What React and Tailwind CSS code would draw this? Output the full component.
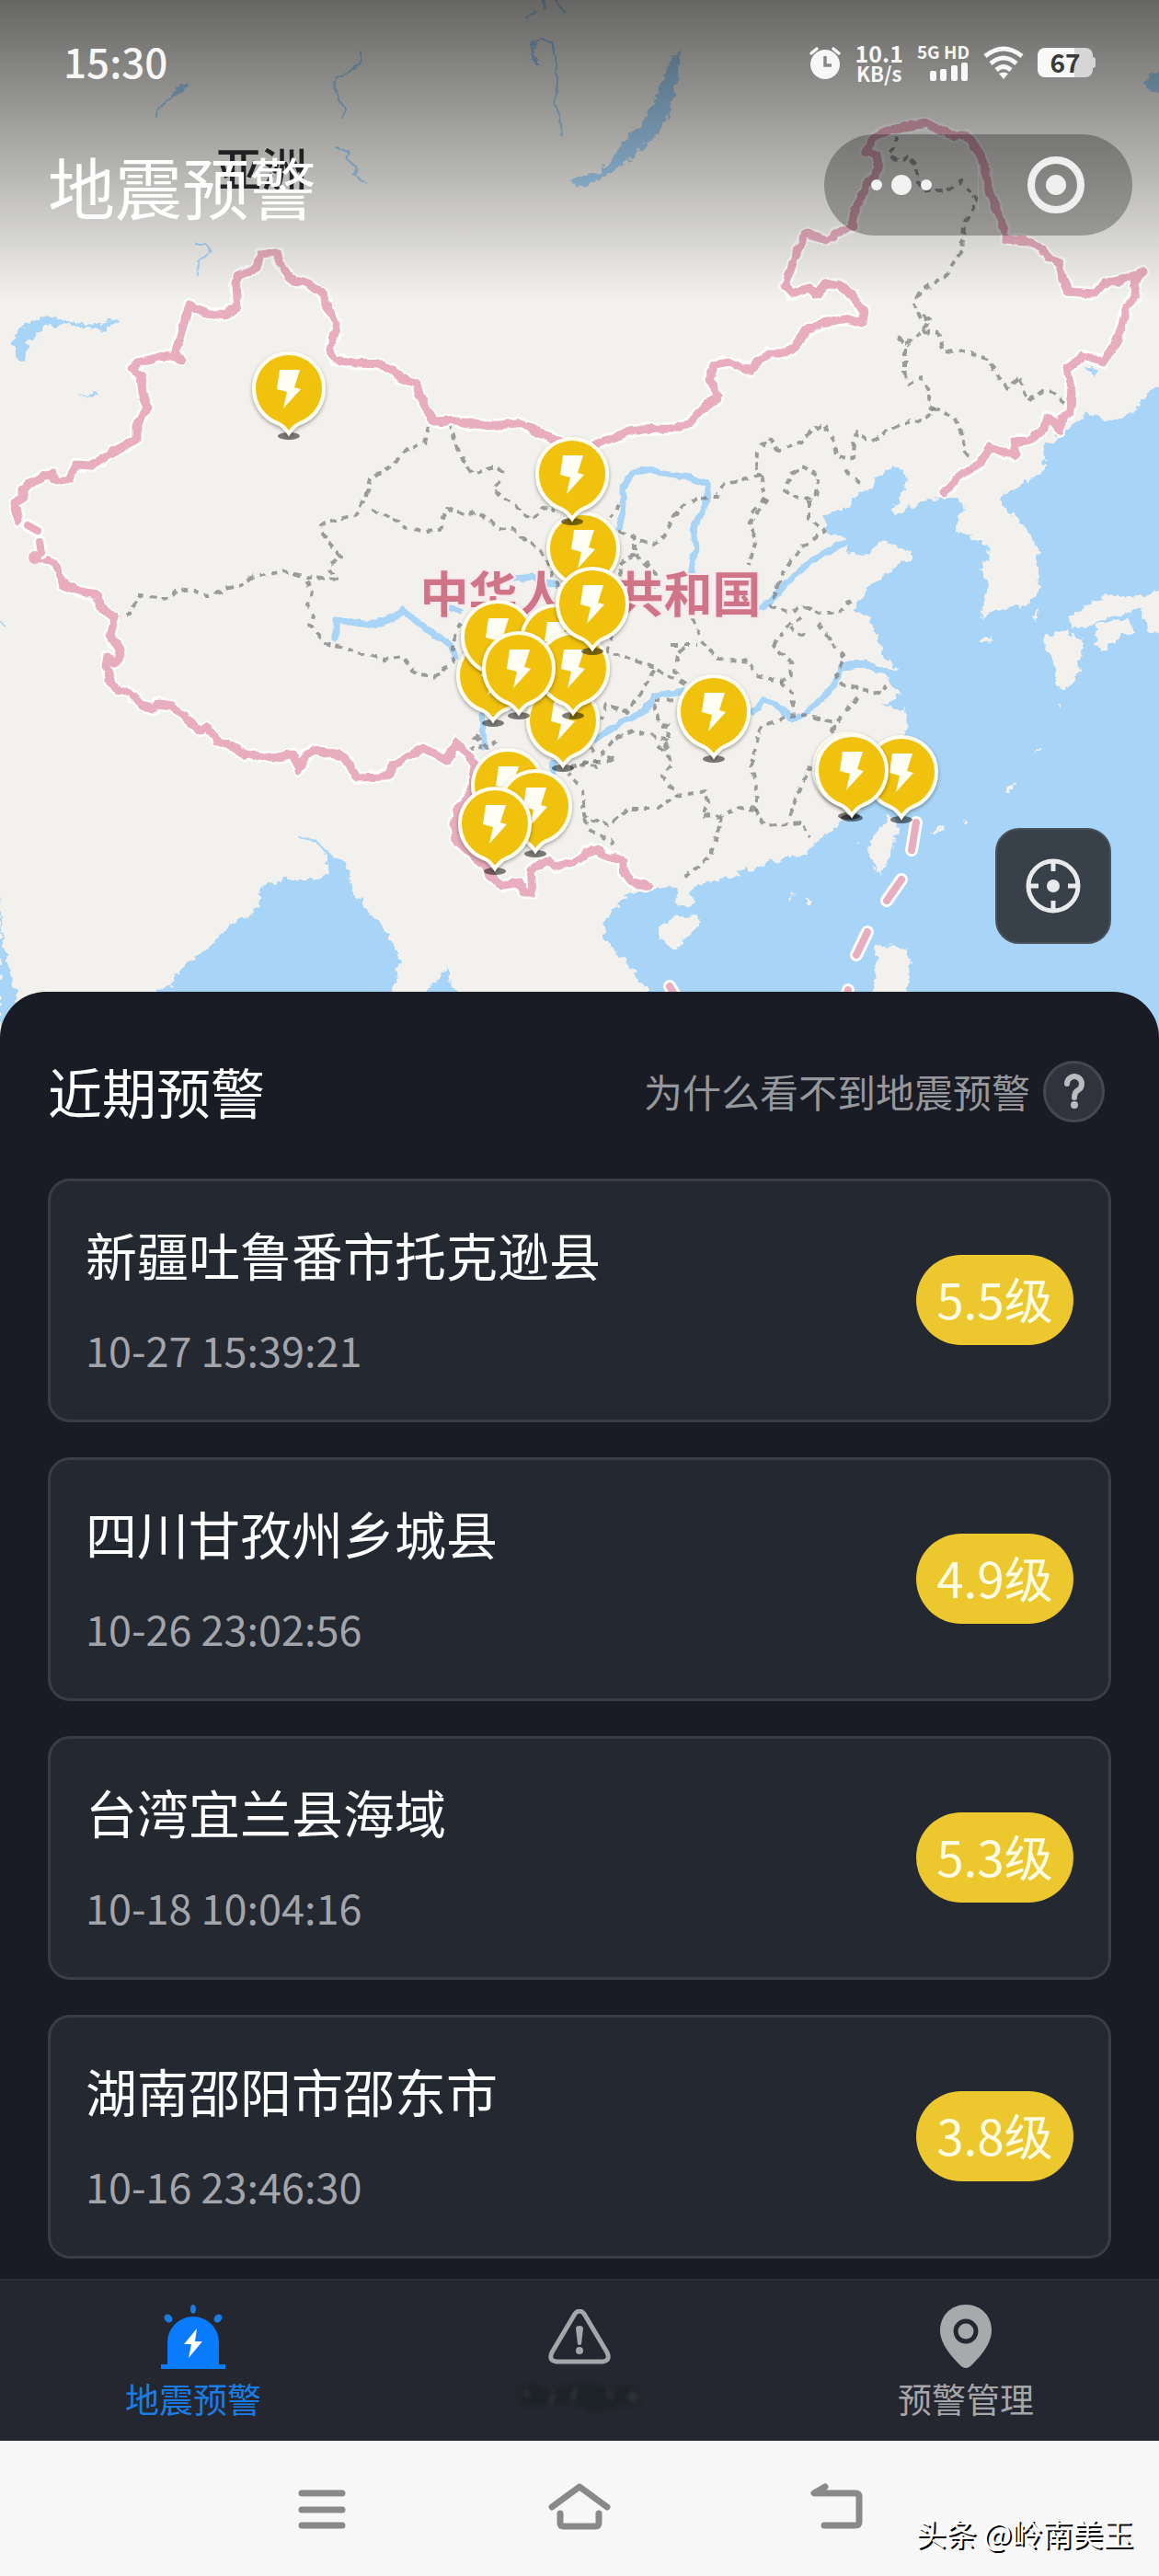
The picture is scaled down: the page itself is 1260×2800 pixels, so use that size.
import { useState } from "react";

const warnings = [
  { id: 1, place: "新疆吐鲁番市托克逊县", time: "10-27 15:39:21", level: "5.5级" },
  { id: 2, place: "四川甘孜州乡城县", time: "10-26 23:02:56", level: "4.9级" },
  { id: 3, place: "台湾宜兰县海域", time: "10-18 10:04:16", level: "5.3级" },
  { id: 4, place: "湖南邵阳市邵东市", time: "10-16 23:46:30", level: "3.8级" },
];

// back to front, centre of each pin head
const pins = [
  [314, 422], [634, 596], [622, 515], [536, 734], [541, 692], [605, 696],
  [612, 783], [623, 726], [564, 726], [644, 656], [552, 853], [582, 876],
  [538, 895], [776, 773], [980, 839], [923, 835], [926, 837],
];

const seas = [
  // east and south china sea
  "M1260 417L1245 430L1233 448L1202 458L1188 451L1180 448L1168 463L1148 475L1136 486L1134 510L1112 527L1088 540L1090 551L1112 569L1128 597L1130 622L1126 647L1116 658L1092 661L1066 670L1074 633L1066 613L1076 608L1072 590L1038 576L1048 551L1044 542L1024 540L1004 544L972 561L968 554L980 544L986 517L976 508L964 510L951 527L929 540L925 551L907 556L895 561L897 576L921 585L923 601L939 604L957 588L992 599L992 610L980 611L959 627L943 640L927 661L947 674L959 708L980 735L964 738L980 754L959 767L984 772L986 786L982 811L972 836L951 869L935 879L911 897L875 927L831 940L791 954L755 963L751 976L753 985L745 989L736 981L738 965L706 963L678 976L660 997L656 1017L678 1044L706 1077V1140H1260Z",
  // bay of bengal
  "M170 1140V1078L189 1069L193 1056L229 1029L249 1004L273 995L283 979L283 965L305 956L342 956L358 949L354 926L378 940L382 965L402 992L420 1011L426 1022L434 1045L428 1078V1140Z",
  "M462 1078L480 1061L484 1051L495 1078V1140H462Z",
  "M0 972L4 1029L20 1086V1140H0Z",
];

const islands = [
  "M1270 642L1231 648L1200 647L1160 672L1164 683L1180 681L1213 669L1241 663L1245 686L1270 692Z",
  "M1192 679L1225 672L1233 686L1208 697L1198 708L1190 701Z",
  "M1156 685L1178 697L1170 740L1156 751L1146 744L1146 719L1134 704L1136 694Z",
  "M1065 697L1072 692L1080 695L1073 700Z",
  "M967 886L976 897L972 922L957 951L953 944L944 933L945 915Z",
  "M760 995L758 1008L736 1032L716 1022L716 1008L730 997Z",
  "M953 1026L986 1031L990 1058L984 1078V1100H949Z",
  "M1126 818L1132 810L1130 816L1124 822Z",
  "M1095 858L1106 848L1100 858L1096 864Z",
  "M1013 902L1027 898L1024 904L1015 906Z",
  "M1046 890L1051 893L1047 895Z",
  "M875 976L881 980L877 985Z",
  "M860 971L864 974L860 977Z",
  "M931 912L935 915L933 920Z",
  "M1150 765L1154 766L1151 770Z",
  "M1124 668L1129 664L1126 679Z",
];

const lakes = [
  "M24 396L14 375L20 358L42 345L64 346L80 351L104 353L125 346L129 351L112 359L80 354L48 353L40 365L30 372L28 386Z",
  "M87 429L98 427L110 429L100 432Z",
  "M738 53L740 62L732 103L724 129L716 143L690 169L664 188L650 196L630 203L617 196L630 193L654 186L668 169L680 152L702 127L716 100L726 72Z",
  "M1270 76L1249 82L1244 91L1252 99L1270 103Z",
  "M1181 401L1187 399L1193 404L1188 409Z",
  "M206 90L196 92L184 106L198 100Z",
  "M578 42L586 52L580 60L590 70L576 66Z",
];

const streams = [
  "M204 92L186 107L171 120V125",
  "M392 57V66L386 75L366 84L363 96L374 117L373 128",
  "M579 45L590 42L600 46L604 62L605 88L603 114L609 126L611 148",
  "M366 160L380 166L376 172L388 182L386 192L398 199",
  "M590 0L592 10M572 18L582 14M604 0L614 14",
  "M214 264L222 266L229 274L216 284L215 300",
  "M326 910L344 914L356 928M0 676L6 680",
];

const rivers = [
  "M673 574L678 551L677 529L690 513L707 510L720 515L750 519L768 526L770 544L762 558L753 576L756 597L752 619V640",
  "M828 660L838 654L853 636L880 611L894 602L921 588",
  "M558 629L579 627L590 634L603 635",
  "M365 695V674L402 679L422 674L438 663L462 683L490 701L495 715",
  "M487 660L500 664M524 776L526 811M602 830L600 850",
  "M647 804L673 786L697 776L713 756L743 751L780 760",
  "M819 774L831 761L843 765L859 781L875 777L907 745L915 724L939 722L976 735",
];

const provinces = [
  "M466 463L462 482L442 489L420 510L402 520L398 540L394 547L386 560L356 567L348 572L356 588L370 604L358 615L364 631L333 627L309 621L273 627L263 636L249 639L225 648L201 640L191 642L183 651L151 648L141 669L128 671",
  "M333 631L340 644L335 658L341 670L337 680L354 699L386 708L418 717L438 714L454 733L478 735L492 719L494 690L502 676",
  "M404 554L432 565L440 573L464 578L478 576L486 553L508 560L518 556L542 574L558 576L585 595L595 608L601 629L612 650",
  "M488 460L500 494L513 515L537 508L548 513M543 524L537 533L557 547L577 565L590 552L605 554",
  "M673 577L693 586L710 592L723 583L733 561L747 547L767 542L782 538L788 526L808 522L825 517L822 504L823 490L835 476L847 490L873 479L883 467L897 461L907 482L909 496L927 499L929 482L931 470L948 480L963 470L988 458L1006 457L1016 444L1036 451L1044 468L1050 492L1056 499",
  "M976 148L967 169L978 176L988 170L996 179L996 196L1006 208L1028 208L1046 197L1062 217L1048 245L1046 272L1034 289L1028 300L1004 315L992 327L1002 348L1012 346L1004 360L984 374L984 406L988 418L1002 410L1010 427L1008 439L1016 444",
  "M1004 360L1020 362L1026 381L1056 384L1076 393L1088 413L1098 422L1108 410L1118 436L1132 425L1144 427L1162 441",
  "M976 368L988 376M1004 340L1012 350",
  "M673 548L663 562M827 517L833 544L823 558L815 572L822 590L813 615",
  "M919 511L937 527M871 506L891 517L887 540L870 543L853 534L859 517Z",
  "M831 542L815 560M879 544V563L897 578L871 595L859 610L849 627L839 658L859 665L875 660L891 667L911 667L925 654",
  "M871 670L855 683L841 702L859 719L861 733L849 740L823 735L815 720L783 717L769 706L761 694L753 674L752 640",
  "M875 690L860 684M891 677L903 697L919 715L909 733L917 745L947 751L959 754L963 745",
  "M931 758L915 779L903 797M871 777L890 780L906 784",
  "M849 740L861 754L863 777L831 788L823 801L817 833L823 861L821 879L805 877L785 886L763 888L771 872L767 860L736 865L714 879L682 879L662 897L638 890L635 886L633 858L618 840",
  "M730 701H757M744 704L736 711L734 729L747 745L712 726L682 715L660 708L666 692",
  "M712 729L690 761L682 774L658 767L654 782",
  "M745 760L710 761L716 786L728 790L724 812L730 830L720 844L736 865M716 810L726 820",
  "M726 805L690 794L666 804L654 820L670 826L630 830M630 832L650 834",
  "M783 897L771 933L740 956M785 886L783 897",
  "M821 879L831 897L871 894L881 911M859 886L875 844L888 824",
  "M636 890L640 902L666 915L654 925",
  "M690 590L690 602L713 622L712 640M690 602L673 615L676 640",
  "M514 802L530 812L540 806M508 815L524 812M516 800L526 806M620 834L650 828M645 818L640 810",
];

const country = [
  "M301 274L283 276L279 291L259 300L256 310L258 334L243 343L219 339L206 331L199 355L191 381L197 391L181 386L151 394L143 400L153 410L155 427L161 444L149 461V477L121 492L98 506L82 505L76 520L60 523L57 514L42 520L24 532L26 541L16 547L20 565",
  "M38 604L58 611L64 620L68 634L82 642L105 646L110 661L124 672L120 690L131 706L129 718L125 722L117 713L115 724L121 742L129 752L139 752L149 761L167 772L173 765L187 767L205 783L217 794L225 790L237 806L257 813L267 822L277 820L297 824L319 819L324 838L331 822L342 815L372 822L380 831L387 845L420 844L428 831L460 813L486 826L495 808L506 817L516 831L512 860L496 883L494 897L496 913L514 930L528 942L534 951L546 963L565 960L569 970H579L577 945L595 935L603 942L630 935L637 927L650 923L660 931L677 935V947L687 958L705 963",
  "M301 274L305 289L319 305L335 308L352 320L356 334L366 351L363 365L358 379L364 391L388 395L416 396L438 411L452 418L462 442L472 458L488 457L532 463L562 460L578 465L589 473L607 479L630 486L650 483L690 467L730 466L750 460L763 444L782 431L771 413L777 396L791 393L815 403L835 384H855L867 375L875 360L895 351L919 346L937 351L939 339L927 322L911 308L897 310L889 320L879 313L861 319L853 310L859 293L867 272L877 253L898 262L915 251L928 245L927 234L941 203L956 183L953 169L941 165L951 148L967 141L1008 134L1036 148H1052L1066 169L1078 214L1088 238L1094 260L1116 262L1132 270L1144 282L1152 286L1156 305L1162 317L1190 319L1200 308L1217 305L1241 296L1233 307L1235 320L1225 334L1215 369L1200 394L1178 387L1160 401L1165 427L1164 448L1154 454L1152 468L1140 453L1134 467L1118 479L1102 480L1104 494L1090 492L1076 486L1066 503L1044 517L1026 536",
];

const dashes = [
  "M30 571L41 577M43 589L45 601",
  "M996 894L991 924M980 956L964 979M943 1013L931 1038M728 1072L736 1086M922 1076L918 1090",
];

const Pin = ({ x, y }) => (
  <g transform={`translate(${x} ${y})`}>
    <ellipse cx="0" cy="52" rx="12" ry="4" fill="#000" opacity="0.5" />
    <path
      d="M-38 0A38 38 0 1 1 38 0C38 19 26 33 12 38C7 40 4 43 0 49C-4 43-7 40-12 38C-26 33-38 19-38 0Z"
      fill="#f0c207"
      stroke="#fffdf0"
      strokeWidth="4"
      filter="url(#pinShadow)"
    />
    <path d="M-10-20H12L6-1L13 1L-6 22L-2 4L-13 1Z" fill="#fffef5" />
  </g>
);

const QuakeMap = () => (
  <svg
    className="block h-[1140px] w-full bg-[#f2f1ed]"
    viewBox="0 0 1260 1140"
    preserveAspectRatio="xMidYMin slice"
    role="img"
    aria-label="地震预警地图"
  >
    <defs>
      <filter id="coast" filterUnits="userSpaceOnUse" x="-20" y="-20" width="1300" height="1180">
        <feTurbulence type="fractalNoise" baseFrequency="0.12" numOctaves="3" seed="4" />
        <feDisplacementMap in="SourceGraphic" scale="12" xChannelSelector="R" yChannelSelector="G" />
      </filter>
      <filter id="rough" filterUnits="userSpaceOnUse" x="-20" y="-20" width="1300" height="1180">
        <feTurbulence type="fractalNoise" baseFrequency="0.08" numOctaves="2" seed="7" />
        <feDisplacementMap in="SourceGraphic" scale="7" xChannelSelector="R" yChannelSelector="G" />
      </filter>
      <filter id="pinShadow" x="-20%" y="-20%" width="140%" height="140%">
        <feDropShadow dx="0" dy="2" stdDeviation="2" floodColor="#000" floodOpacity="0.35" />
      </filter>
      <linearGradient id="shade" x1="0" y1="0" x2="0" y2="1">
        <stop offset="0" stopColor="#000" stopOpacity="0.58" />
        <stop offset="1" stopColor="#000" stopOpacity="0" />
      </linearGradient>
    </defs>

    <g filter="url(#coast)">
      <rect x="-20" y="-20" width="1300" height="1180" fill="#f2f1ed" />
      <rect x="1258" y="420" width="22" height="740" fill="#a7d4f7" />
      <g fill="#a7d4f7">
        {seas.map((d) => <path key={d} d={d} />)}
        {lakes.map((d) => <path key={d} d={d} />)}
      </g>
      <g fill="#f2f1ed">
        {islands.map((d) => <path key={d} d={d} />)}
      </g>
    </g>

    <g fill="none" strokeLinejoin="round" strokeLinecap="round" filter="url(#rough)">
      <g stroke="#a7d4f7" strokeWidth="2">
        {streams.map((d) => <path key={d} d={d} />)}
      </g>
      <g stroke="#a7d4f7" strokeWidth="7">
        {rivers.map((d) => <path key={d} d={d} />)}
      </g>
      <g stroke="#7f7f7f" strokeOpacity="0.75" strokeWidth="4" strokeLinecap="butt" strokeDasharray="7 6">
        {provinces.map((d) => <path key={d} d={d} />)}
      </g>
      <g stroke="#fff" strokeWidth="14">
        {country.map((d) => <path key={d} d={d} />)}
      </g>
      <g stroke="#e8adbf" strokeWidth="9">
        {country.map((d) => <path key={d} d={d} />)}
      </g>
    </g>

    <g fill="none" strokeLinecap="round">
      <g stroke="#fff" strokeWidth="14">
        {dashes.map((d) => <path key={d} d={d} />)}
      </g>
      <g stroke="#e8adbf" strokeWidth="8">
        {dashes.map((d) => <path key={d} d={d} />)}
      </g>
      <circle cx="38" cy="606" r="7" fill="#e8adbf" />
    </g>

    <g fontFamily='"Noto Sans CJK SC", sans-serif' textAnchor="middle">
      <text x="284" y="203" fontSize="50" fontWeight="500" fill="#2c2d2f">亚洲</text>
      <text
        x="642"
        y="666"
        fontSize="53"
        fontWeight="700"
        fill="#d07487"
        stroke="#fbe9ee"
        strokeWidth="4"
        paintOrder="stroke"
      >
        中华人民共和国
      </text>
    </g>

    <rect width="1260" height="325" fill="url(#shade)" />

    {pins.map(([x, y]) => (
      <Pin key={`${x}-${y}`} x={x} y={y} />
    ))}
  </svg>
);

const StatusBar = () => (
  <div className="flex h-[136px] items-center justify-between pl-[69px] pr-[69px] text-[#f7f7f7]">
    <span className="pb-1 text-[44px] font-medium leading-none">15:30</span>
    <div className="flex items-center gap-[15px]">
      <svg className="h-9 w-9" viewBox="0 0 36 36" aria-hidden="true">
        <circle cx="18" cy="20" r="16" fill="#f7f7f7" />
        <path d="M3 8L9 3M33 8L27 3" stroke="#f7f7f7" strokeWidth="3.5" strokeLinecap="round" />
        <path d="M18 11V21H25" fill="none" stroke="#858686" strokeWidth="3.5" />
      </svg>
      <div className="text-center text-[25px] font-bold leading-[22px]">
        <div>10.1</div>
        <div className="text-[22px]">KB/s</div>
      </div>
      <div className="flex flex-col items-end gap-1">
        <span className="text-[19px] font-bold leading-4">5G HD</span>
        <svg className="h-5 w-11" viewBox="0 0 44 20" fill="#f7f7f7" aria-hidden="true">
          <rect x="1" y="9" width="7" height="11" rx="2" />
          <rect x="12" y="7" width="7" height="13" rx="2" />
          <rect x="24" y="3" width="7" height="17" rx="2" />
          <rect x="35" y="0" width="7" height="20" rx="2" />
        </svg>
      </div>
      <svg className="h-9 w-11" viewBox="0 0 44 36" fill="none" stroke="#f7f7f7" strokeWidth="5" aria-hidden="true">
        <path d="M2 11Q22-5 42 11" />
        <path d="M8 19Q22 7 36 19" />
        <path d="M14 26Q22 19 30 26" />
        <path d="M22 36L17 30Q22 27 27 30Z" fill="#f7f7f7" stroke="none" />
      </svg>
      <div className="flex items-center">
        <div className="flex h-8 w-[60px] items-center justify-center rounded-[8px] bg-linear-to-r from-[#f9f9f9] from-66% to-[#d6d6d6] to-66% pb-0.5 text-[28px] font-bold leading-none text-[#3a3a3a]">
          67
        </div>
        <div className="h-3 w-[3px] rounded-r-sm bg-[#d6d6d6]" />
      </div>
    </div>
  </div>
);

const Capsule = () => (
  <div className="flex h-[110px] w-[335px] items-center rounded-full bg-black/28">
    <button type="button" aria-label="更多" className="flex h-full flex-1 items-center justify-center gap-[10px]">
      <span className="h-3 w-3 rounded-full bg-[#f2f2f2]" />
      <span className="h-[22px] w-[22px] rounded-full bg-[#f2f2f2]" />
      <span className="h-3 w-3 rounded-full bg-[#f2f2f2]" />
    </button>
    <span className="h-14 w-px bg-white/10" />
    <button type="button" aria-label="关闭" className="flex h-full flex-1 items-center justify-center">
      <span className="flex h-[62px] w-[62px] items-center justify-center rounded-full border-8 border-[#efefef]">
        <span className="h-[22px] w-[22px] rounded-full bg-[#efefef]" />
      </span>
    </button>
  </div>
);

const WarningCard = ({ place, time, level }) => (
  <li className="flex items-center justify-between rounded-[24px] border-3 border-[#3a3d46] bg-[#242831] px-[38px] pt-[43px] pb-[44px]">
    <div className="flex flex-col gap-9">
      <h2 className="text-[56px] leading-[72px] text-white">{place}</h2>
      <time className="text-[45px] leading-[64px] text-[#a3a5aa]">{time}</time>
    </div>
    <span className="flex h-[98px] w-[171px] shrink-0 items-center justify-center rounded-full bg-[#ecc82e] pb-1 text-[53px] leading-none text-[#fffde3]">
      {level}
    </span>
  </li>
);

const SirenIcon = () => (
  <svg className="h-[70px] w-[70px]" viewBox="0 0 70 70" aria-hidden="true">
    <path d="M7 65V41A28 28 0 0 1 63 41V65H70V70H0V65Z" fill="#0a7bfd" />
    <g fill="#1a7ce6">
      <ellipse cx="35" cy="5" rx="3" ry="5" />
      <ellipse cx="8" cy="15" rx="4" ry="5" transform="rotate(-40 8 15)" />
      <ellipse cx="62" cy="15" rx="4" ry="5" transform="rotate(40 62 15)" />
    </g>
    <path d="M39 26L25 43H33L30 58L45 40H37Z" fill="#fff" />
  </svg>
);

const AlertIcon = () => (
  <svg className="h-[60px] w-[68px]" viewBox="0 0 68 60" fill="none" aria-hidden="true">
    <path
      d="M29 5Q34-1 39 5L64 47Q68 56 59 57H9Q0 56 4 47Z"
      stroke="#a5a6a9"
      strokeWidth="5"
      strokeLinejoin="round"
    />
    <path d="M30 21Q30 18 34 18Q38 18 38 21L36 38Q34 40 32 38Z" fill="#a5a6a9" />
    <circle cx="34" cy="45" r="4" fill="#a5a6a9" />
  </svg>
);

const PlaceIcon = () => (
  <svg className="h-[70px] w-[58px]" viewBox="0 0 58 70" aria-hidden="true">
    <path d="M29 0C45 0 57 12 57 28C57 44 42 59 34 67Q29 71 24 67C16 59 1 44 1 28C1 12 13 0 29 0Z" fill="#a8a9ab" />
    <circle cx="29" cy="29" r="11" fill="#a8a9ab" stroke="#24272f" strokeWidth="5" />
  </svg>
);

// label of the middle tab is smeared out
const Smudge = () => (
  <svg className="h-10 w-36" viewBox="0 0 144 40" aria-hidden="true">
    <defs>
      <filter id="smear">
        <feGaussianBlur stdDeviation="2.5" />
      </filter>
    </defs>
    <g filter="url(#smear)">
      <path d="M6 12L24 6L40 14L60 8L84 5L104 12L134 10L138 26L112 30L88 36L60 26L36 30L10 30Z" fill="#1f2126" />
      <path d="M12 14L18 20M44 16L40 28M68 12L64 24M102 14L108 22" stroke="#33363b" strokeWidth="4" />
      <circle cx="130" cy="20" r="5" fill="#33363b" />
    </g>
  </svg>
);

const tabs = [
  { key: "quake", label: "地震预警", icon: <SirenIcon /> },
  { key: "alert", label: "", icon: <AlertIcon /> },
  { key: "manage", label: "预警管理", icon: <PlaceIcon /> },
];

const App = () => {
  const [active, setActive] = useState("quake");

  return (
    <div className="flex min-h-screen flex-col bg-[#191c24] font-['Noto_Sans_CJK_SC',sans-serif]">
      <section className="relative">
        <QuakeMap />
        <header className="absolute inset-x-0 top-0">
          <StatusBar />
          <div className="flex items-center justify-between pt-[10px] pl-[52px] pr-[29px]">
            <h1 className="text-[73px] leading-[110px] text-white">地震预警</h1>
            <Capsule />
          </div>
        </header>
        <button
          type="button"
          aria-label="定位"
          className="absolute right-[52px] bottom-[114px] flex h-[126px] w-[126px] items-center justify-center rounded-[26px] border-2 border-[#4a525c] bg-[#38404a]"
        >
          <svg className="h-16 w-16" viewBox="0 0 64 64" fill="none" stroke="#e9eaec" strokeWidth="5" aria-hidden="true">
            <circle cx="32" cy="32" r="27" />
            <path d="M32 5V16M32 48V59M5 32H16M48 32H59" />
            <circle cx="32" cy="32" r="7" fill="#e9eaec" stroke="none" />
          </svg>
        </button>
      </section>

      <main className="relative -mt-[62px] flex-1 rounded-t-[50px] bg-[#191c24] px-[52px] pt-[68px] pb-5">
        <div className="flex h-20 items-center justify-between pr-[7px]">
          <h2 className="text-[59px] leading-[72px] text-white">近期预警</h2>
          <a href="#help" className="flex items-center gap-[14px] text-[42px] leading-[60px] text-[#96989c]">
            为什么看不到地震预警
            <span className="flex h-[67px] w-[67px] items-center justify-center rounded-full border-3 border-[#454850] bg-[#30333c]">
              <svg className="h-[38px] w-6" viewBox="0 0 24 38" fill="none" aria-hidden="true">
                <path d="M4 11A8 8 0 1 1 16 18Q12 20 12 26" stroke="#b9bbbf" strokeWidth="6" strokeLinecap="round" />
                <circle cx="12" cy="34" r="4" fill="#b9bbbf" />
              </svg>
            </span>
          </a>
        </div>
        <ul className="mt-[55px] flex flex-col gap-[38px]">
          {warnings.map((w) => (
            <WarningCard key={w.id} {...w} />
          ))}
        </ul>
      </main>

      <nav className="grid h-[176px] grid-cols-3 border-t-2 border-[#2b2e36] bg-[#24272f]">
        {tabs.map((tab) => (
          <button
            key={tab.key}
            type="button"
            aria-label={tab.label || "警报"}
            onClick={() => setActive(tab.key)}
            className={`flex flex-col items-center pt-6 text-[37px] leading-[44px] ${
              active === tab.key ? "text-[#1a7ce6]" : "text-[#a5a6a9]"
            }`}
          >
            <span className="flex h-[74px] items-center">{tab.icon}</span>
            <span className="mt-2">{tab.label || <Smudge />}</span>
          </button>
        ))}
      </nav>

      <footer className="relative flex h-[147px] items-center justify-center gap-[212px] bg-[#f7f7f7] pb-1">
        <button type="button" aria-label="最近任务">
          <svg className="h-[52px] w-[68px]" viewBox="0 0 68 52" stroke="#898989" strokeWidth="7" strokeLinecap="round" aria-hidden="true">
            <path d="M12 11H56M12 29H56M12 46H56" />
          </svg>
        </button>
        <button type="button" aria-label="主页">
          <svg className="h-[52px] w-[68px]" viewBox="0 0 68 52" fill="none" stroke="#898989" strokeWidth="7" strokeLinecap="round" strokeLinejoin="round" aria-hidden="true">
            <path d="M4 26L34 4L64 26M13 33V43Q13 47 17 47H51Q55 47 55 43V33" />
          </svg>
        </button>
        <button type="button" aria-label="返回">
          <svg className="h-[52px] w-[68px]" viewBox="0 0 68 52" fill="none" stroke="#898989" strokeWidth="7" strokeLinecap="round" strokeLinejoin="round" aria-hidden="true">
            <path d="M21 4L9 11H54Q58 11 58 15V42Q58 46 54 46H20" />
          </svg>
        </button>
        <span className="absolute right-[28px] bottom-[27px] text-[33px] leading-10 text-white [text-shadow:2px_2px_0_#000]">
          头条 @岭南美玉
        </span>
      </footer>
    </div>
  );
};

export default App;
